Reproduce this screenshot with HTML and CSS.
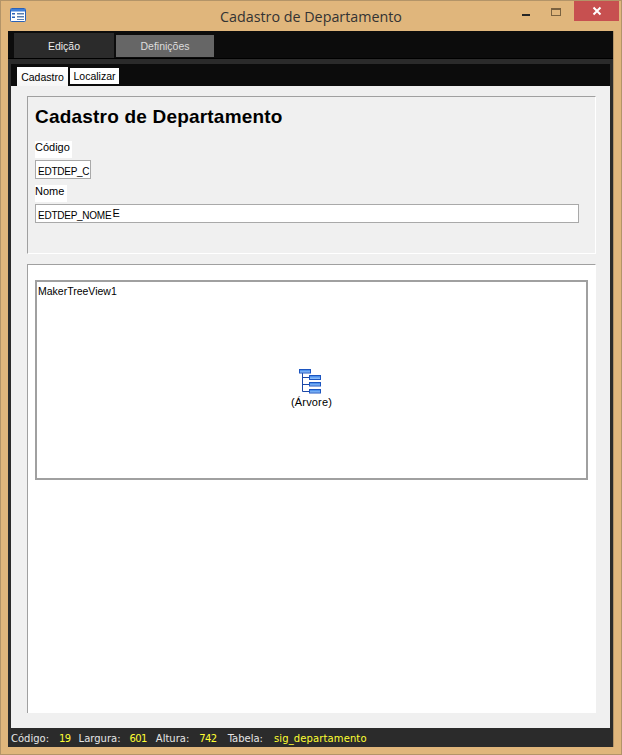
FILE: index.html
```html
<!DOCTYPE html>
<html lang="pt">
<head>
<meta charset="utf-8">
<title>Cadastro de Departamento</title>
<link rel="stylesheet" href="styles.css">
</head>
<body>
<div class="window">
  <header class="titlebar">
    <svg class="app-icon" width="16" height="14" viewBox="0 0 16 14">
      <rect x="0.5" y="0.5" width="15" height="13" rx="1" fill="#fff" stroke="#2a62b8"/>
      <rect x="1" y="1" width="14" height="2.5" fill="#3f7fd8"/>
      <rect x="2" y="5" width="3" height="1.5" fill="#2a62b8"/>
      <rect x="2" y="8.5" width="3" height="1.5" fill="#2a62b8"/>
      <rect x="7" y="5" width="7" height="1.5" fill="#5a7fb0"/>
      <rect x="7" y="8" width="7" height="1.5" fill="#5a7fb0"/>
      <rect x="7" y="11" width="7" height="1" fill="#5a7fb0"/>
    </svg>
    <h1 class="window-title">Cadastro de Departamento</h1>
    <div class="controls">
      <span class="btn-min"></span>
      <span class="btn-max"></span>
      <span class="btn-close">
        <svg width="10" height="10" viewBox="0 0 10 10"><path d="M1.5 1.5L8.500 8.500M8.500 1.500L1.500 8.500" stroke="#fff" stroke-width="2"/></svg>
      </span>
    </div>
  </header>
  <div class="client">
    <nav class="main-tabs">
      <span class="main-tab active">Edição</span>
      <span class="main-tab">Definições</span>
    </nav>
    <div class="main-body">
      <nav class="sub-tabs">
        <span class="sub-tab active">Cadastro</span>
        <span class="sub-tab">Localizar</span>
      </nav>
      <main class="content">
        <section class="panel form-panel">
          <h2 class="heading">Cadastro de Departamento</h2>
          <label class="label label-codigo">Código</label>
          <div class="input input-codigo">EDTDEP_C</div>
          <label class="label label-nome">Nome</label>
          <div class="input input-nome">EDTDEP_NOME<span class="value">E</span></div>
        </section>
        <section class="panel tree-panel">
          <div class="tree">
            <span class="tree-name">MakerTreeView1</span>
            <div class="tree-center">
              <svg class="tree-icon" width="24" height="26" viewBox="0 0 24 26">
                <defs>
                  <linearGradient id="node" x1="0" y1="0" x2="0" y2="1">
                    <stop offset="0" stop-color="#2f7be6"/>
                    <stop offset="1" stop-color="#a9d2ff"/>
                  </linearGradient>
                </defs>
                <path d="M3.500 5V23.500M3.500 9.500H10M3.500 16.500H10M3.500 23.500H10" stroke="#1c49a8" fill="none"/>
                <rect x="0.500" y="1.500" width="11" height="3.500" fill="url(#node)" stroke="#1c55c0"/>
                <rect x="10.500" y="7.500" width="11" height="4" fill="url(#node)" stroke="#1c55c0"/>
                <rect x="10.500" y="14.500" width="11" height="3.500" fill="url(#node)" stroke="#1c55c0"/>
                <rect x="10.500" y="21.500" width="11" height="3.500" fill="url(#node)" stroke="#1c55c0"/>
              </svg>
              <span class="tree-caption">(Árvore)</span>
            </div>
          </div>
        </section>
      </main>
      <footer class="status">
        <span class="key k1">Código:</span><span class="val v1">19</span>
        <span class="key">Largura:</span><span class="val v2">601</span>
        <span class="key">Altura:</span><span class="val v3">742</span>
        <span class="key">Tabela:</span><span class="val v4">sig_departamento</span>
      </footer>
    </div>
  </div>
</div>
</body>
</html>
```

FILE: styles.css
```css
* { box-sizing: border-box; }
html, body { margin: 0; padding: 0; }
body { width: 622px; height: 755px; overflow: hidden; font-family: "Liberation Sans", Arial, sans-serif; font-size: 11px; color: #000; }

.window { width: 622px; height: 755px; background: #e0b67c; border: 1px solid #b39468; display: flex; flex-direction: column; }

.titlebar { height: 30px; display: flex; align-items: flex-start; position: relative; flex: none; }
.app-icon { margin: 7px 0 0 9px; }
.window-title { position: absolute; left: 0; right: 0; top: 6px; margin: 0; text-align: center; font: 400 14.3px/20px "Open Sans", sans-serif; color: #333; }
.controls { margin-left: auto; display: flex; align-items: flex-start; position: relative; }
.btn-min { width: 8px; height: 2px; background: #262626; margin: 13px 21px 0 0; }
.btn-max { width: 10px; height: 8px; border: 1px solid #7a6240; border-top-width: 2px; margin: 7px 13px 0 0; }
.btn-close { width: 45px; height: 20px; background: #c75050; display: flex; align-items: center; justify-content: center; margin-right: 2px; }

.client { margin: 0 7px 7px 7px; flex: 1; min-height: 0; display: flex; flex-direction: column; background: #2b2b2b; border-right: 1px solid #b39468; }

.main-tabs { height: 28px; flex: none; background: #0c0c0c; border-bottom: 1px solid #000; display: flex; align-items: flex-end; padding-left: 6px; gap: 2px; }
.main-tab { width: 98px; height: 22px; background: #666; color: #ddd; font-size: 10.500px; display: flex; align-items: center; justify-content: center; margin-bottom: 1px; }
.main-tab.active { width: 100px; height: 25px; background: #2b2b2b; color: #ececec; margin-bottom: 0; }

.main-body { flex: 1; min-height: 0; padding: 5px 3px 0 3px; display: flex; flex-direction: column; }

.sub-tabs { height: 22px; flex: none; background: #0c0c0c; display: flex; align-items: flex-start; padding: 3px 0 0 6px; gap: 2px; }
.sub-tab { width: 49px; height: 16px; margin-top: 1px; background: #fff; display: flex; align-items: center; justify-content: center; font-size: 10.500px; }
.sub-tab.active { width: 51px; height: 19px; margin-top: 0; background: linear-gradient(#fff, #f6f6f6); }

.content { flex: 1; min-height: 0; background: #f0f0f0; padding: 10px 14px 15px 16px; display: flex; flex-direction: column; gap: 10px; }

.panel { border-top: 1px solid #a0a0a0; border-left: 1px solid #a0a0a0; border-right: 1px solid #fff; border-bottom: 1px solid #fff; }
.form-panel { height: 158px; flex: none; padding: 0 16px 0 7px; display: flex; flex-direction: column; align-items: flex-start; }
.heading { margin: 10px 0 0; font: 700 19px/20px "Liberation Sans", sans-serif; letter-spacing: 0.2px; }
.label { background: #fff; height: 17px; line-height: 12px; padding: 0 3px 0 0; font-size: 11px; }
.label-codigo { width: 37px; margin-top: 14px; }
.label-nome { width: 32px; margin-top: 6px; }
.input { background: #fff; border: 1px solid #a9a9a9; height: 19px; line-height: 19px; padding: 1px 0 0 2px; font-size: 10px; letter-spacing: -0.25px; white-space: nowrap; overflow: hidden; }
.input-codigo { width: 56px; margin-top: 2px; }
.input-nome { width: 544px; margin-top: 2px; }
.value { font-size: 11px; letter-spacing: 0; position: relative; top: -2px; margin-left: 1px; }

.tree-panel { flex: 1; min-height: 0; background: #fff; border-bottom: none; padding: 15px 7px 0 7px; }
.tree { height: 200px; border: 2px solid #a0a0a0; position: relative; display: flex; align-items: center; justify-content: center; }
.tree-name { position: absolute; left: 1px; top: 3px; font-size: 10.500px; }
.tree-center { display: flex; flex-direction: column; align-items: center; padding-top: 16px; }
.tree-icon { margin-right: 2px; }
.tree-caption { font-size: 11px; letter-spacing: 0.15px; line-height: 13px; margin-top: 2px; }

.status { height: 19px; flex: none; background: #2b2b2b; color: #e6e6e6; display: flex; align-items: center; font-family: "DejaVu Sans", sans-serif; font-size: 10px; padding: 2px 0 0 0; margin: 0; white-space: nowrap; }
.val { color: #ffff33; }
.v1, .v2, .v3 { letter-spacing: -0.6px; }
.v4 { letter-spacing: 0.12px; }
.v1 { margin: 0 8px 0 10px; }
.v2 { margin: 0 9px 0 9px; }
.v3 { margin: 0 11px 0 10px; }
.v4 { margin-left: 11px; }
```
